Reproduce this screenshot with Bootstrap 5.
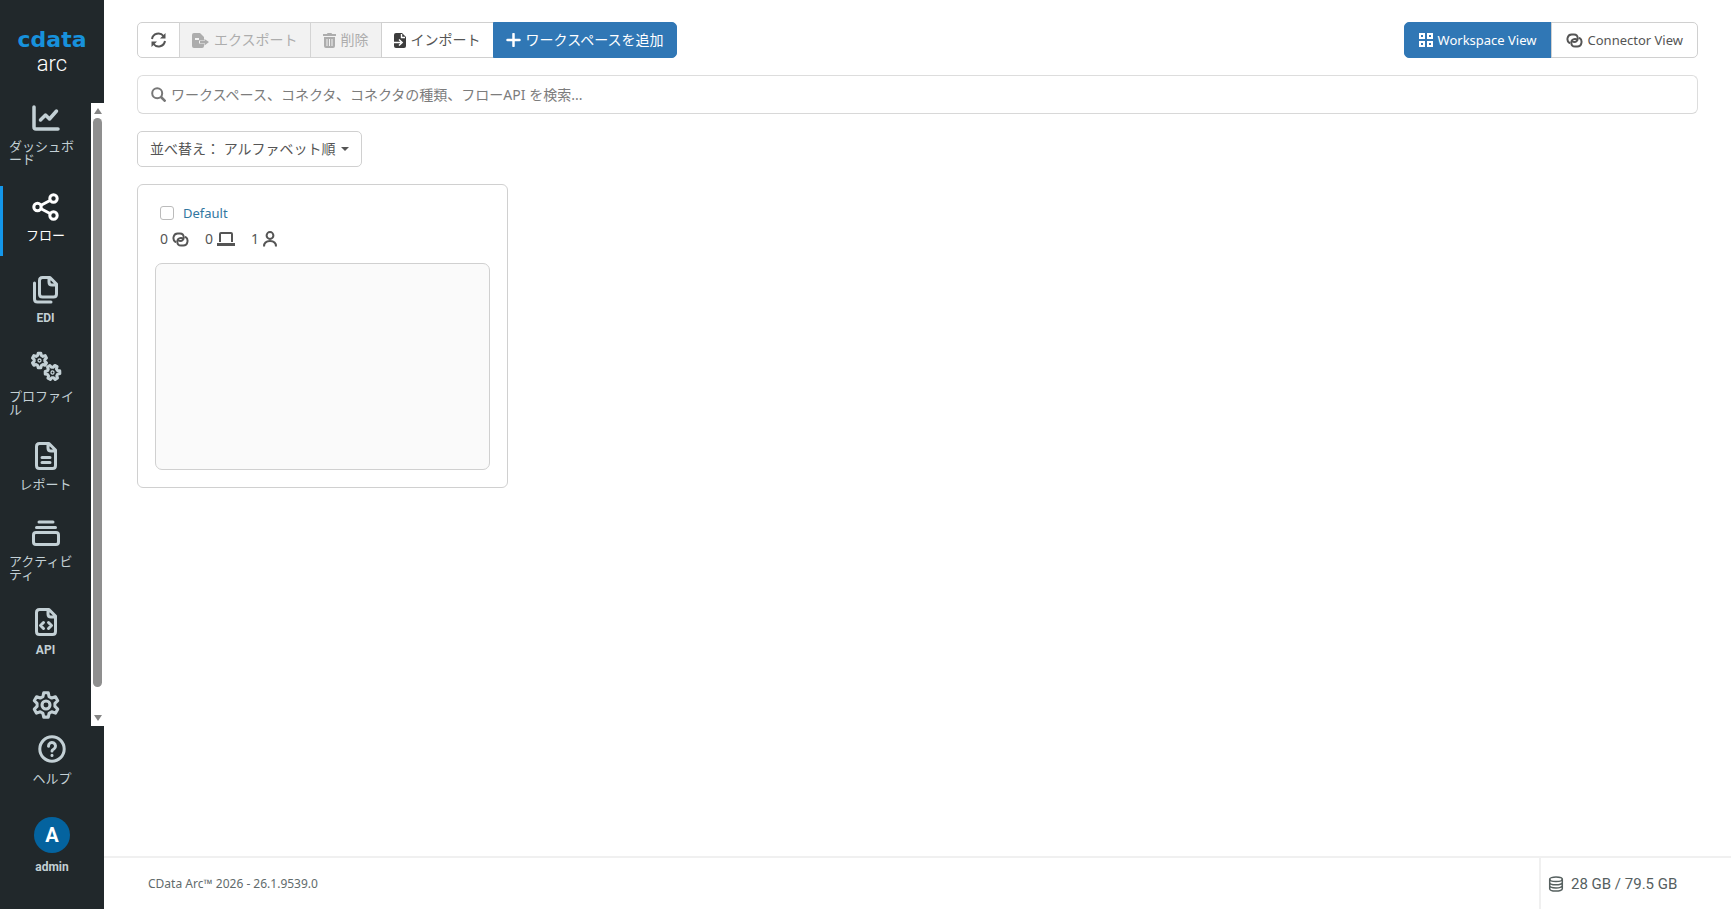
<!DOCTYPE html>
<html lang="ja">
<head>
<meta charset="utf-8">
<meta name="viewport" content="width=device-width, initial-scale=1">
<title>CData Arc</title>
<link href="https://cdn.jsdelivr.net/npm/bootstrap@5.3.0/dist/css/bootstrap.min.css" rel="stylesheet">
<style>
  body { font-family: "Noto Sans", "Noto Sans CJK JP", sans-serif; font-size: 14px; line-height: 20px; color: #555; background: #fff; }
  svg { display: block; flex: none; }
  .ic { fill: none; stroke: currentColor; stroke-width: 3; stroke-linecap: round; stroke-linejoin: round; }

  /* Sidebar */
  .side { width: 104px; flex: none; background: #21282b; color: #c3d0d5; font-family: Roboto, "Noto Sans CJK JP", sans-serif; font-size: 12px; }
  .brand { height: 103px; padding-top: 27px; text-decoration: none; flex: none; }
  .brand-name { font: bold 22px/26px "DejaVu Sans", sans-serif; color: #1791dc; }
  .brand-product { font-size: 22px; font-weight: 300; line-height: 22px; color: #fff; }
  .side-items { gap: 13px; min-height: 0; }
  .side-link { height: 70px; flex: none; gap: 8px; padding: 0 9px 7px 6px; color: #c3d0d5; text-decoration: none; border-left: 3px solid transparent; font-weight: bold; line-height: 13px; }
  .side-link.active { color: #fff; border-left-color: #1497ea; }
  .jp { font-size: 13px; font-weight: normal; word-break: break-all; }
  .rail { width: 13px; flex: none; background: #fff; padding: 5px 0; gap: 4px; }
  .thumb { width: 9px; border-radius: 5px; background: #8f8f8f; }
  .up, .down { border: 4px solid transparent; }
  .up { border-top: 0; border-bottom: 6px solid #858585; }
  .down { border-bottom: 0; border-top: 6px solid #858585; margin-top: 24px; }
  .side-foot { height: 183px; flex: none; padding: 9px 0 34px; }
  .side-foot a { color: #c3d0d5; text-decoration: none; font-weight: bold; line-height: 16px; }
  .avatar { width: 36px; height: 36px; background: #04639f; color: #fff; font-size: 20px; }

  /* Main */
  .work { padding: 22px 33px 24px; gap: 17px; }
  .btn { --bs-btn-font-size: 14px; --bs-btn-line-height: 20px; --bs-btn-padding-x: 12px; --bs-btn-padding-y: 7px; --bs-btn-border-radius: 5px; display: inline-flex; align-items: center; gap: 5px; white-space: nowrap; }
  .views .btn { --bs-btn-font-size: 13px; --bs-btn-padding-x: 14px; }
  .btn-plain { --bs-btn-color: #555; --bs-btn-bg: #fff; --bs-btn-border-color: #d0d0d0; --bs-btn-hover-bg: #f2f2f2; --bs-btn-hover-border-color: #ccc; --bs-btn-disabled-color: #adadad; --bs-btn-disabled-bg: #f2f2f2; --bs-btn-disabled-border-color: #d4d4d4; --bs-btn-disabled-opacity: 1; }
  .btn-blue { --bs-btn-color: #fff; --bs-btn-bg: #3077b5; --bs-btn-border-color: #3077b5; --bs-btn-hover-color: #fff; --bs-btn-hover-bg: #286090; }
  .find { height: 39px; border: 1px solid #ddd; border-bottom-color: #d8d8d8; border-radius: 6px; padding: 0 13px; gap: 5px; color: #777; }
  .find input { border: 0; outline: 0; background: transparent; color: #4a4a4a; }
  .find input::placeholder { color: #7c7c7c; opacity: 1; }
  .cards { --bs-gutter-x: 26px; }
  .space { border: 1px solid #d0d0d0; border-radius: 6px; padding: 18px 17px 17px; }
  .space-head { gap: 9px; padding-left: 5px; }
  .space a { color: #31779f; text-decoration: none; font-size: 13px; }
  .space .form-check-input { width: 14px; height: 14px; margin: 0; border-color: #bbb; border-radius: 3px; }
  .facts { gap: 16px; margin: 6px 0 14px; padding-left: 5px; }
  .facts span { display: flex; align-items: center; gap: 4px; }
  .canvas { height: 207px; border: 1px solid #d0d0d0; border-radius: 7px; background: #fafafa; }
  .foot { height: 53px; border-top: 2px solid #f0f0f0; color: #626b6c; font-size: 12px; }
  .version { padding-left: 44px; }
  .disk { width: 192px; border-left: 2px solid #f0f0f0; padding-left: 7px; gap: 7px; font: 15px/20px Roboto, sans-serif; color: #56605f; }
</style>
</head>
<body>
<svg width="0" height="0" class="position-absolute" aria-hidden="true">
  <symbol id="links" viewBox="0 0 18 16">
    <g fill="none" stroke="currentColor" stroke-width="2.100" stroke-linecap="round"><path d="M3.500 10.500C0.200 8.500 1 1.500 6 1.500h2.500C13.500 1.500 14 9.700 8.500 9.700q-1.500 0-2-1"/><path d="M14.500 5.500C17.800 7.500 17 14.500 12 14.500H9.500C4.500 14.500 4 6.300 9.500 6.300q1.500 0 2 1"/></g>
  </symbol>
  <symbol id="cog" viewBox="0 0 24 24">
    <path d="M10.300 2h3.400l.6 2.900 2 1.100 2.800-1 1.700 3-2.100 2v2.300l2.100 2-1.700 3-2.800-1-2 1.200-.6 2.800h-3.400l-.6-2.800-2-1.200-2.800 1-1.700-3 2.100-2V10L3.200 8l1.700-3 2.800 1 2-1.100z" transform="translate(0 .8)"/>
  </symbol>
</svg>
<div class="d-flex min-vh-100">
  <aside class="side d-flex flex-column vh-100 sticky-top">
    <a href="#" class="brand d-flex flex-column align-items-center">
      <span class="brand-name">cdata</span><span class="brand-product">arc</span>
    </a>
    <div class="d-flex flex-grow-1 overflow-hidden">
      <nav class="side-items d-flex flex-column flex-grow-1 overflow-hidden">
        <a href="#" class="side-link d-flex flex-column align-items-center justify-content-center">
          <svg class="ic" width="28" height="28" viewBox="0 0 28 28" style="stroke-width:3.500"><path d="M2 3v20q0 2 2 2h22"/><path d="M8.500 16l5-5 4 4 7-8"/></svg>
          <span class="jp">ダッシュボード</span></a>
        <a href="#" class="side-link active d-flex flex-column align-items-center justify-content-center" aria-current="page">
          <svg class="ic" width="28" height="28" viewBox="0 0 28 28"><circle cx="5.500" cy="14" r="3.700"/><circle cx="21.500" cy="5.500" r="3.700"/><circle cx="21.500" cy="22.500" r="3.700"/><path d="M9.500 12l8.500-4.500M9.500 16l8.500 4.500"/></svg>
          <span class="jp">フロー</span></a>
        <a href="#" class="side-link d-flex flex-column align-items-center justify-content-center">
          <svg class="ic" width="28" height="28" viewBox="0 0 28 28"><path d="M10.500 1.500H18l6.500 6.500v10q0 3-3 3h-11q-3 0-3-3V4.500q0-3 3-3zM17 2v4q0 3 3 3h4"/><path d="M2.500 7v16q0 3 3 3H19"/></svg>
          EDI</a>
        <a href="#" class="side-link d-flex flex-column align-items-center justify-content-center">
          <svg class="ic" width="32" height="31" viewBox="0 0 32 31"><svg width="19" height="19" viewBox="0 0 24 24"><g style="stroke-width:3.800"><use href="#cog"/><circle cx="12" cy="12" r=".8"/></g></svg><svg x="13" y="12" width="19" height="19" viewBox="0 0 24 24"><g transform="rotate(28 12 12)" style="stroke-width:3.800"><use href="#cog"/><circle cx="12" cy="12" r=".8"/></g></svg></svg>
          <span class="jp">プロファイル</span></a>
        <a href="#" class="side-link d-flex flex-column align-items-center justify-content-center">
          <svg class="ic" width="28" height="28" viewBox="0 0 28 28"><path d="M7.500 1.500H17l6.500 6.500v15.500q0 3-3 3h-13q-3 0-3-3v-19q0-3 3-3zM16 2v4q0 3 3 3h4M10 15.500h8M10 20.500h8"/></svg>
          <span class="jp">レポート</span></a>
        <a href="#" class="side-link d-flex flex-column align-items-center justify-content-center">
          <svg class="ic" width="28" height="28" viewBox="0 0 28 28"><rect x="1.500" y="13.500" width="25" height="12" rx="2.500"/><path d="M4.500 8.500h19M7 3h14"/></svg>
          <span class="jp">アクティビティ</span></a>
        <a href="#" class="side-link d-flex flex-column align-items-center justify-content-center">
          <svg class="ic" width="28" height="28" viewBox="0 0 28 28"><path d="M7.500 1.500H17l6.500 6.500v15.500q0 3-3 3h-13q-3 0-3-3v-19q0-3 3-3zM16 2v4q0 3 3 3h4M11.500 14.500L8.500 17.500l3 3M16.500 14.500l3 3-3 3"/></svg>
          API</a>
        <a href="#" class="side-link d-flex flex-column align-items-center justify-content-center" aria-label="設定">
          <svg class="ic" width="32" height="32" viewBox="0 0 24 24"><g style="stroke-width:2.300"><use href="#cog"/><circle cx="12" cy="12" r="3"/></g></svg>
          <span class="jp">&nbsp;</span></a>
      </nav>
      <div class="rail d-flex flex-column align-items-center" aria-hidden="true">
        <span class="up"></span><span class="thumb flex-grow-1"></span><span class="down"></span>
      </div>
    </div>
    <div class="side-foot d-flex flex-column align-items-center justify-content-between">
      <a href="#" class="d-flex flex-column align-items-center gap-2">
        <svg class="ic" width="28" height="28" viewBox="0 0 28 28"><circle cx="14" cy="14" r="12.200"/><path d="M10.500 11.200a3.500 3.500 0 1 1 5.400 2.800q-1.900 1-1.900 2M14 20.200v.2"/></svg>
        <span class="jp">ヘルプ</span></a>
      <a href="#" class="d-flex flex-column align-items-center" style="gap:6px">
        <span class="avatar rounded-circle d-flex align-items-center justify-content-center">A</span>admin</a>
    </div>
  </aside>

  <div class="d-flex flex-column flex-grow-1">
    <main class="work d-flex flex-column flex-grow-1">
      <div class="d-flex justify-content-between">
        <div class="btn-group">
          <button type="button" class="btn btn-plain" aria-label="更新"><svg width="17" height="16" viewBox="0 0 16 16" fill="none" stroke="currentColor" stroke-width="2"><path d="M1.500 7A6.500 6.500 0 0 1 13 4M14.500 9A6.500 6.500 0 0 1 3 12"/><path d="M15 1v5.500H9.500zM1 15V9.500h5.500z" fill="currentColor" stroke="none"/></svg></button>
          <button type="button" class="btn btn-plain" disabled><svg width="17" height="15" viewBox="0 0 17 15" fill="currentColor"><path d="M2 0h6l4 4v3.500H7v3h5V13q0 2-2 2H2q-2 0-2-2V2q0-2 2-2zM12.500 6l4.500 3-4.500 3.500v-2.500H8v-2h4.500z"/><path d="M3 5h4v2H3z" fill="#f2f2f2"/></svg>エクスポート</button>
          <button type="button" class="btn btn-plain" disabled><svg width="13" height="15" viewBox="0 0 13 15" fill="currentColor"><path d="M4 1q0-1 1-1h3q1 0 1 1h4v2H0V1zM1 4h11v9q0 2-2 2H3q-2 0-2-2z"/><path d="M4 6v7M6.500 6v7M9 6v7" stroke="#f2f2f2"/></svg>削除</button>
          <button type="button" class="btn btn-plain"><svg width="12" height="15" viewBox="0 0 12 15"><path d="M2 0h6l4 4v9q0 2-2 2H2q-2 0-2-2V2q0-2 2-2z" fill="#3d3d3d"/><path d="M0 9.500h7M5 6.500l3.200 3-3.200 3M7.500 1v3.500H11" stroke="#fff" stroke-width="1.400" fill="none"/></svg>インポート</button>
          <button type="button" class="btn btn-blue"><svg width="15" height="14" viewBox="0 0 14 14" stroke="currentColor" stroke-width="2.500" stroke-linecap="round"><path d="M7 1v12M1 7h12"/></svg>ワークスペースを追加</button>
        </div>
        <div class="btn-group views">
          <button type="button" class="btn btn-blue"><svg width="14" height="14" viewBox="0 0 14 14" fill="none" stroke="currentColor" stroke-width="2"><rect x="1" y="1" width="4" height="4"/><rect x="9" y="1" width="4" height="4"/><rect x="1" y="9" width="4" height="4"/><rect x="9" y="9" width="4" height="4"/></svg>Workspace View</button>
          <button type="button" class="btn btn-plain"><svg width="17" height="15"><use href="#links"/></svg>Connector View</button>
        </div>
      </div>

      <label class="find d-flex align-items-center">
        <svg width="15" height="15" viewBox="0 0 15 15" fill="none" stroke="currentColor" stroke-width="2"><circle cx="6.200" cy="6.200" r="5"/><path d="M10 10l4.500 4.500" stroke-width="2.500"/></svg>
        <input type="text" class="flex-grow-1 p-0" aria-label="検索" placeholder="ワークスペース、コネクタ、コネクタの種類、フローAPI を検索...">
      </label>

      <div class="dropdown">
        <button type="button" class="btn btn-plain" data-bs-toggle="dropdown">並べ替え： アルファベット順<svg width="8" height="4" viewBox="0 0 8 4" fill="currentColor"><path d="M0 0h8L4 4z"/></svg></button>
        <ul class="dropdown-menu"><li><a class="dropdown-item" href="#">アルファベット順</a></li></ul>
      </div>

      <div class="row cards">
        <div class="col-3">
          <section class="space">
            <div class="space-head d-flex align-items-center">
              <input class="form-check-input" type="checkbox" aria-label="Default を選択">
              <a href="#">Default</a>
            </div>
            <div class="facts d-flex">
              <span>0<svg width="17" height="15"><use href="#links"/></svg></span>
              <span>0<svg width="18" height="14" viewBox="0 0 18 14" fill="none" stroke="currentColor" stroke-width="2"><path d="M3 10V2q0-1 1-1h10q1 0 1 1v8"/><path d="M0 12.500h18" stroke-width="3"/></svg></span>
              <span>1<svg width="14" height="16" viewBox="0 0 14 16" fill="none" stroke="currentColor" stroke-width="2"><circle cx="7" cy="4.500" r="3.400"/><path d="M1 15.500q0-5.500 6-5.500t6 5.500"/></svg></span>
            </div>
            <div class="canvas"></div>
          </section>
        </div>
      </div>
    </main>
    <footer class="foot d-flex">
      <div class="version flex-grow-1 d-flex align-items-center">CData Arc™ 2026 - 26.1.9539.0</div>
      <div class="disk d-flex align-items-center">
        <svg class="ic" width="16" height="16" viewBox="0 0 16 16" style="stroke-width:1.500"><ellipse cx="8" cy="3.300" rx="6.300" ry="2.300"/><path d="M1.700 3.300v9.400c0 3.100 12.600 3.100 12.600 0V3.300M1.700 6.500c0 3.100 12.600 3.100 12.600 0M1.700 9.600c0 3.100 12.600 3.100 12.600 0"/></svg>
        28 GB / 79.5 GB</div>
    </footer>
  </div>
</div>
<script src="https://cdn.jsdelivr.net/npm/bootstrap@5.3.0/dist/js/bootstrap.bundle.min.js"></script>
</body>
</html>
